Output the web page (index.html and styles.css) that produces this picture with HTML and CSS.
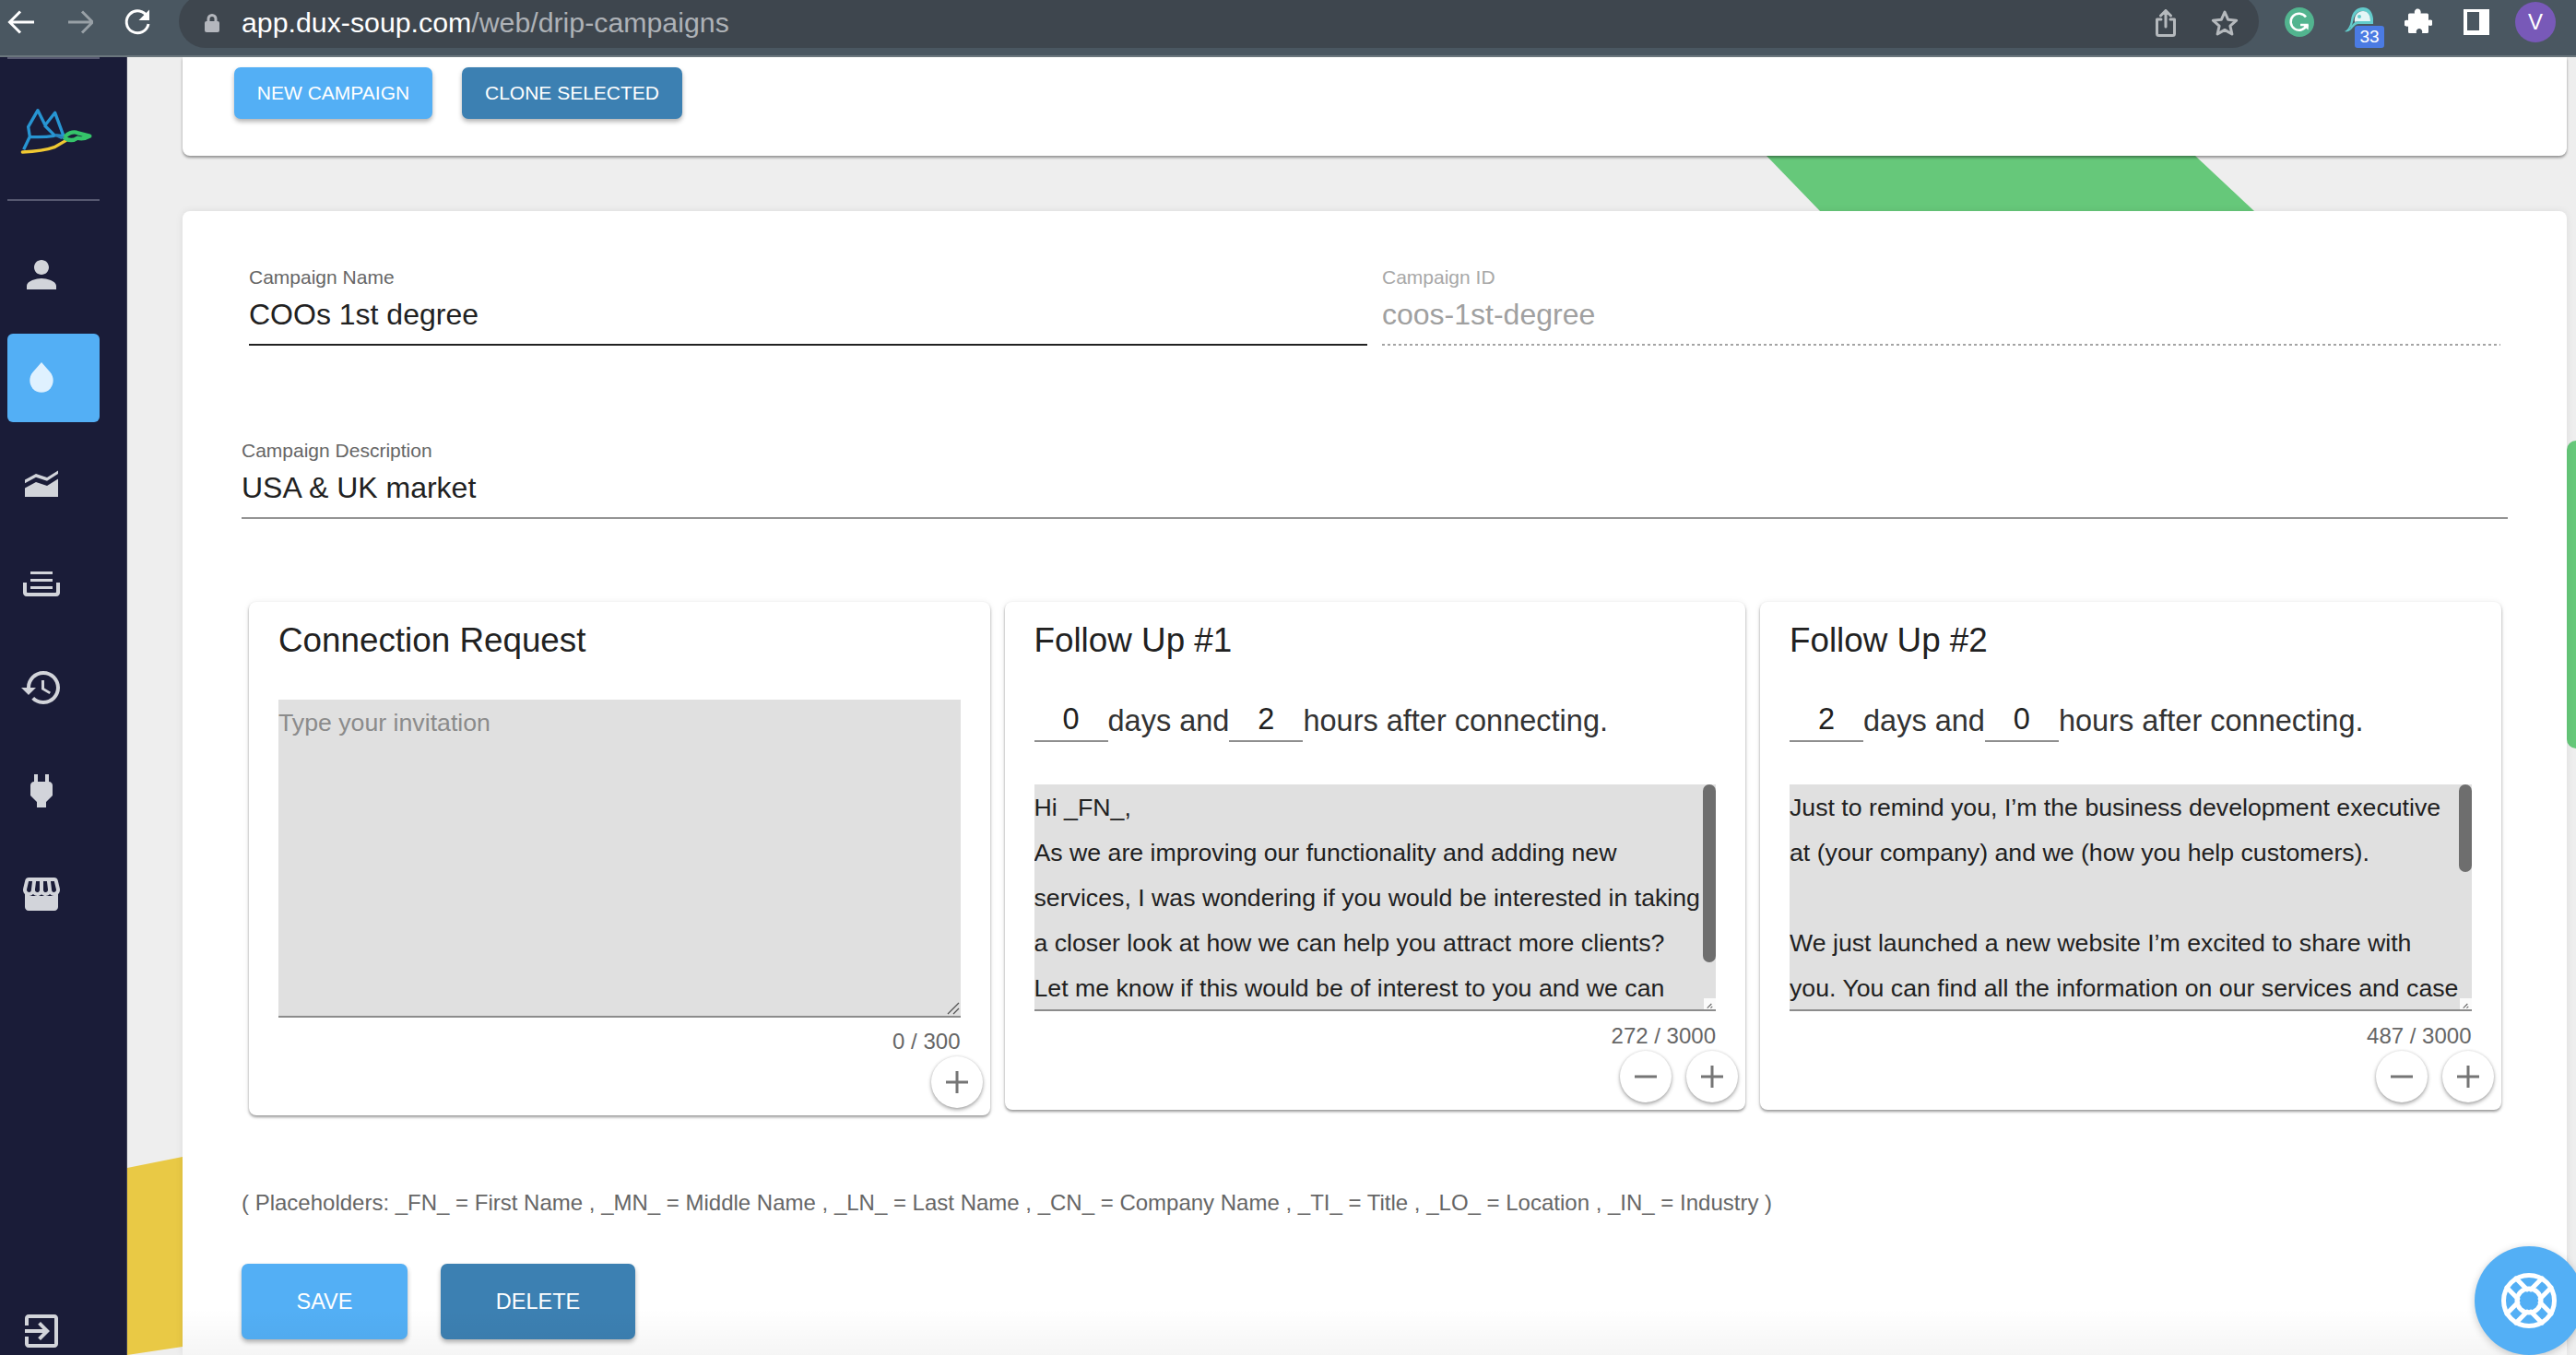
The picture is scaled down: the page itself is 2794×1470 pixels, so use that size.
FILE: index.html
```html
<!DOCTYPE html>
<html lang="en">
<head>
<meta charset="utf-8">
<title>Drip Campaigns</title>
<link rel="stylesheet" href="styles.css">
</head>
<body>
<div class="app">
  <header class="toolbar">
    <svg class="tb-nav" viewBox="0 0 30 30"><path class="st-white" d="M29 15H3M14 3.500 2.500 15 14 26.500"/></svg>
    <svg class="tb-nav" viewBox="0 0 30 30"><path class="st-dim" d="M3 15h26M18 3.500 29.500 15 18 26.500"/></svg>
    <svg class="tb-nav" viewBox="0 0 30 30"><path class="st-white" d="M26 9.500A12 12 0 1 0 27 17"/><path class="fl-white" d="M28 1.500V13H16.500z"/></svg>
    <div class="omnibox">
      <svg class="lock" viewBox="0 0 16 20"><path class="st-lock" d="M4 9V5.500a4 4 0 0 1 8 0V9"/><rect class="fl-lock" x="0" y="8" width="16" height="12" rx="2"/></svg>
      <span class="url"><span class="url-host">app.dux-soup.com</span>/web/drip-campaigns</span>
      <svg class="omni-share" viewBox="0 0 24 30"><path class="st-grey" d="M7 11H2.500v15.500a2 2 0 0 0 2 2h15a2 2 0 0 0 2-2V11H17M12 19V2M6.500 7 12 1.500 17.500 7"/></svg>
      <svg class="omni-star" viewBox="0 0 30 30"><path class="st-grey" d="M15 3l3.700 8.300 9 .900-6.800 6 2 8.800L15 22.400 7.100 27l2-8.800-6.800-6 9-.900z"/></svg>
    </div>
    <svg class="ext-g" viewBox="0 0 32 32"><circle class="fl-gram" cx="16" cy="16" r="16"/><path class="st-gram" d="M23 10.500a9 9 0 1 0 1 8.500h-7"/><path class="fl-white" d="M20.500 20l5 4.500.5-6z"/></svg>
    <div class="ext-duck">
      <svg class="duck" viewBox="0 0 32 30"><path class="fl-teal" d="M1 27c4-2 6-6 7-12C9 6 14 1 21 1c6 0 10 4 11 12v6H16c-3 0-5 3-8 6-2 2-5 3-7 2z"/><path class="fl-toolbar" d="M5.500 25c3-2 4-6 5-10 1-6 5-10 10-10 5 0 8 4 8.500 11H16c-4 0-6 3-8 6z"/><path class="fl-pale" d="M12 17c-1-7 3-12 9-12 5 0 8 4 8 11H17c-2 0-4 0-5 1z"/><circle class="fl-teal" cx="17" cy="11" r="2"/></svg>
      <span class="badge">33</span>
    </div>
    <svg class="ext-puzzle" viewBox="0 0 30 30"><path class="fl-white" d="M11 1c3-1.500 6 1 5 4.500h7a1.500 1.500 0 0 1 1.500 1.500v6c4-1.500 6 1.500 5 4-1 2-3 2.500-5 1.500v7a1.500 1.500 0 0 1-1.500 1.500h-5.500c.9-3-1-5-3-5s-4 2-3 5H4a1.500 1.500 0 0 1-1.500-1.500v-6c-2.500 1-5-1-5-3.300 0-2.700 2.500-4 5-3V7A1.500 1.500 0 0 1 4 5.500h5.500C9 4 9.500 2 11 1z" transform="translate(1.500 0)"/></svg>
    <div class="ext-side"><span class="ext-side-hole"></span></div>
    <div class="avatar">V</div>
  </header>

  <div class="workspace">
    <nav class="sidebar">
      <div class="logo-wrap">
        <svg class="logo" viewBox="0 0 300 210">
          <path class="logo-blue" d="M32 172 52 130 47 98 78 44l24 48 32-40 28 76-30-3-32-32M52 130c30 2 60 0 80-3"/>
          <path class="logo-yellow" d="M28 180c40-2 75-6 104-16l38-22"/>
          <path class="logo-green" d="M165 134c6-14 28-24 44-16l38 10c-14 8-28 10-40 6-14 10-30 8-42 0z"/>
          <path class="logo-blue-fill" d="M132 122c12 2 26 4 34 10l-12 6c-8-4-18-8-22-16z"/>
        </svg>
      </div>
      <ul class="nav-list">
        <li class="nav-item"><svg class="nav-icon" viewBox="0 0 24 24"><path d="M12 12c2.210 0 4-1.790 4-4s-1.790-4-4-4-4 1.790-4 4 1.790 4 4 4zm0 2c-2.670 0-8 1.340-8 4v2h16v-2c0-2.660-5.330-4-8-4z"/></svg></li>
        <li class="nav-item nav-active"><svg class="nav-icon" viewBox="0 0 24 24"><path d="M12 3.500L16.600 8.800C19.200 11.900 18.600 15.500 16.800 17.700C14.300 20.600 9.700 20.600 7.200 17.700C5.400 15.500 4.800 11.900 7.400 8.800Z"/></svg></li>
        <li class="nav-item"><svg class="nav-icon" viewBox="-6 -9 48 48"><path d="M0 13.500 12 7l12 4 12-7.500v3.600L24 14.800l-12-4L0 17.300zM0 22.500 12 16l12 4 12-7.500V32H0z"/></svg></li>
        <li class="nav-item"><svg class="nav-icon" viewBox="0 0 48 48"><path d="M12 10h24v3H12zM12 18h24v3H12zM12 26h24v3H12z"/><path d="M4 22h4v10c0 .5.500 1 1 1h30c.5 0 1-.5 1-1V22h4v11c0 2-1.500 4-4 4H8c-2.500 0-4-2-4-4z"/></svg></li>
        <li class="nav-item"><svg class="nav-icon" viewBox="0 0 24 24"><path d="M13 3c-4.970 0-9 4.030-9 9H1l3.890 3.890.070.140L9 12H6c0-3.870 3.130-7 7-7s7 3.130 7 7-3.130 7-7 7c-1.930 0-3.680-.79-4.940-2.060l-1.420 1.420C8.270 19.990 10.510 21 13 21c4.970 0 9-4.030 9-9s-4.030-9-9-9zm-1 5v5l4.280 2.540.72-1.210-3.500-2.080V8H12z"/></svg></li>
        <li class="nav-item"><svg class="nav-icon" viewBox="0 0 24 24"><path d="M16 7V3h-2v4h-4V3H8v4h-.01C6.890 6.990 6 7.890 6 8.980v5.520L9.500 18v3h5v-3l3.500-3.510V9c0-1.100-.9-2-2-2z"/></svg></li>
        <li class="nav-item"><svg class="nav-icon" viewBox="0 0 24 24"><path d="M21.900 8.890l-1.050-4.370c-.22-.9-1-1.520-1.910-1.520H5.050c-.9 0-1.690.63-1.900 1.520L2.100 8.890c-.24 1.020-.02 2.060.62 2.880.08.110.19.190.28.290V19c0 1.100.9 2 2 2h14c1.100 0 2-.9 2-2v-6.940c.09-.09.2-.18.28-.28.64-.82.87-1.870.62-2.890zm-2.990-3.900l1.050 4.370c.1.420.01.84-.25 1.170-.14.180-.44.470-.94.470-.61 0-1.140-.49-1.210-1.140L16.980 5l1.930-.01zM13 5h1.960l.54 4.520c.05.390-.07.78-.33 1.070-.22.26-.54.410-.95.410-.67 0-1.220-.59-1.220-1.310V5zM8.490 9.520L9.040 5H11v4.690c0 .72-.55 1.310-1.290 1.310-.34 0-.65-.15-.89-.41-.25-.29-.37-.68-.33-1.070zm-4.450-.16L5.050 5h1.970l-.58 4.860c-.08.65-.6 1.140-1.210 1.140-.49 0-.8-.29-.93-.47-.27-.32-.36-.75-.26-1.170zM5 19v-6.030c.08.010.15.030.23.030.87 0 1.660-.36 2.240-.95.6.6 1.400.95 2.310.95.87 0 1.650-.36 2.230-.93.59.57 1.390.93 2.290.93.84 0 1.640-.35 2.240-.95.58.59 1.370.95 2.240.95.08 0 .15-.02.23-.03V19H5z"/><path d="M4.500 13h15v6.500h-15z"/></svg></li>
      </ul>
      <div class="nav-bottom"><svg class="nav-icon" viewBox="0 0 24 24"><path d="M10.090 15.590L11.500 17l5-5-5-5-1.410 1.410L12.670 11H3v2h9.670l-2.580 2.590zM19 3H5c-1.110 0-2 .9-2 2v4h2V5h14v14H5v-4H3v4c0 1.100.89 2 2 2h14c1.100 0 2-.9 2-2V5c0-1.100-.9-2-2-2z"/></svg></div>
    </nav>

    <main class="content">
      <div class="decor decor-green-top"></div>
      <div class="decor decor-green-side"></div>
      <div class="decor decor-yellow"></div>

      <section class="top-card">
        <button class="btn btn-light btn-new">NEW CAMPAIGN</button>
        <button class="btn btn-dark btn-clone">CLONE SELECTED</button>
      </section>

      <section class="main-card">
        <div class="field-row">
          <div class="field field-half">
            <div class="field-label">Campaign Name</div>
            <div class="field-value field-value-strong">COOs 1st degree</div>
          </div>
          <div class="field field-half field-disabled">
            <div class="field-label">Campaign ID</div>
            <div class="field-value">coos-1st-degree</div>
          </div>
        </div>
        <div class="field field-desc">
          <div class="field-label">Campaign Description</div>
          <div class="field-value">USA &amp; UK market</div>
        </div>

        <div class="message-row">
          <article class="msg-card">
            <h2 class="msg-title">Connection Request</h2>
            <div class="msg-text msg-text-tall">
              <div class="msg-placeholder">Type your invitation</div>
              <svg class="resize-plain" viewBox="0 0 14 14"><path d="M13 1 1 13M13 7l-6 6"/></svg>
            </div>
            <div class="msg-count msg-count-tall">0 / 300</div>
            <div class="msg-actions">
              <button class="round-btn" aria-label="Add"><svg viewBox="0 0 24 24"><path d="M12 0v24M0 12h24"/></svg></button>
            </div>
          </article>

          <article class="msg-card">
            <h2 class="msg-title">Follow Up #1</h2>
            <div class="delay">
              <span class="delay-num">0</span><span>days and</span><span class="delay-num">2</span><span>hours after connecting.</span>
            </div>
            <div class="msg-text">
              <div>Hi _FN_,</div>
              <div>As we are improving our functionality and adding new</div>
              <div>services, I was wondering if you would be interested in taking</div>
              <div>a closer look at how we can help you attract more clients?</div>
              <div>Let me know if this would be of interest to you and we can</div>
              <span class="scroll-thumb scroll-thumb-long"></span>
              <span class="resize-box"><svg viewBox="0 0 14 12"><path d="M4 11l5-5M8 11l2-2"/></svg></span>
            </div>
            <div class="msg-count">272 / 3000</div>
            <div class="msg-actions">
              <button class="round-btn" aria-label="Remove"><svg viewBox="0 0 24 24"><path d="M0 12h24"/></svg></button>
              <button class="round-btn" aria-label="Add"><svg viewBox="0 0 24 24"><path d="M12 0v24M0 12h24"/></svg></button>
            </div>
          </article>

          <article class="msg-card">
            <h2 class="msg-title">Follow Up #2</h2>
            <div class="delay">
              <span class="delay-num">2</span><span>days and</span><span class="delay-num">0</span><span>hours after connecting.</span>
            </div>
            <div class="msg-text">
              <div>Just to remind you, I’m the business development executive</div>
              <div>at (your company) and we (how you help customers).</div>
              <div>&nbsp;</div>
              <div>We just launched a new website I’m excited to share with</div>
              <div>you. You can find all the information on our services and case</div>
              <span class="scroll-thumb scroll-thumb-short"></span>
              <span class="resize-box"><svg viewBox="0 0 14 12"><path d="M4 11l5-5M8 11l2-2"/></svg></span>
            </div>
            <div class="msg-count">487 / 3000</div>
            <div class="msg-actions">
              <button class="round-btn" aria-label="Remove"><svg viewBox="0 0 24 24"><path d="M0 12h24"/></svg></button>
              <button class="round-btn" aria-label="Add"><svg viewBox="0 0 24 24"><path d="M12 0v24M0 12h24"/></svg></button>
            </div>
          </article>
        </div>

        <p class="placeholders">( Placeholders: _FN_ = First Name , _MN_ = Middle Name , _LN_ = Last Name , _CN_ = Company Name , _TI_ = Title , _LO_ = Location , _IN_ = Industry )</p>

        <div class="form-actions">
          <button class="btn btn-light btn-save">SAVE</button>
          <button class="btn btn-dark btn-delete">DELETE</button>
        </div>
      </section>

      <div class="bottom-fade"></div>
      <button class="help" aria-label="Help">
        <svg viewBox="0 0 60 60"><circle cx="30" cy="30" r="27.500"/><circle cx="30" cy="30" r="13"/><path d="M42.070 27.930L54.160 15.840M32.070 17.930L44.160 5.840M32.070 42.070L44.160 54.160M42.070 32.070L54.160 44.160M17.930 32.070L5.840 44.160M27.930 42.070L15.840 54.160M27.930 17.930L15.840 5.840M17.930 27.930L5.840 15.840"/></svg>
      </button>
    </main>
  </div>
</div>
</body>
</html>
```
FILE: styles.css
```css
* { box-sizing: border-box; }
html, body { margin: 0; padding: 0; height: 100%; overflow: hidden; }
body { font-family: "Liberation Sans", Arial, sans-serif; color: #212121; background: #eee; }
.app { width: 2794px; height: 1470px; display: flex; flex-direction: column; overflow: hidden; }

/* browser toolbar */
.toolbar { height: 62px; flex: none; display: flex; align-items: center; padding: 0 0 12px 8px; background: #4a5761; border-bottom: 2px solid #6b767d; position: relative; z-index: 2; }
.tb-nav { width: 30px; height: 30px; margin-right: 33px; flex: none; }
.st-white, .st-dim, .st-grey, .st-lock, .st-gram { fill: none; stroke-width: 3; }
.st-white { stroke: #fff; }
.st-dim { stroke: #98a0a6; }
.st-grey { stroke: #b5b9bd; stroke-linejoin: round; stroke-linecap: round; }
.st-lock { stroke: #b4b7bd; }
.fl-lock { fill: #b4b7bd; }
.fl-white { fill: #fff; }
.omnibox { align-self: flex-start; margin-top: -6px; margin-left: -3px; margin-right: 28px; width: 2256px; height: 58px; flex: none; display: flex; align-items: center; padding: 3px 22px 0 28px; background: #3e464e; border-radius: 29px; }
.lock { width: 16px; height: 20px; margin-right: 24px; flex: none; }
.url { font-size: 30.300px; color: #aeb2b7; white-space: nowrap; }
.url-host { color: #fff; }
.omni-share { width: 24px; height: 30px; margin-left: auto; }
.omni-star { width: 30px; height: 30px; margin-left: 37px; }
.ext-g { width: 32px; height: 32px; margin-right: 32px; flex: none; }
.fl-gram { fill: #52b48f; }
.st-gram { stroke: #fff; stroke-width: 2.500; }
.ext-duck { width: 44px; height: 48px; margin-right: 22px; flex: none; position: relative; }
.duck { width: 32px; height: 30px; display: block; margin-top: 7px; }
.fl-teal { fill: #62cbcb; }
.fl-toolbar { fill: #4a5761; }
.fl-pale { fill: #e4f6f6; }
.badge { position: absolute; left: 12px; top: 28px; width: 32px; height: 24px; border-radius: 3px; background: #4b7be3; color: #fff; font-size: 19px; line-height: 24px; text-align: center; }
.ext-puzzle { width: 30px; height: 30px; margin-right: 34px; flex: none; }
.ext-side { width: 28px; height: 28px; margin-right: 28px; flex: none; background: #fff; padding: 3px 11px 5px 4px; }
.ext-side-hole { display: block; width: 100%; height: 100%; background: #4a5761; }
.avatar { width: 44px; height: 44px; flex: none; border-radius: 50%; background: #7859b8; color: #fff; font-size: 24px; line-height: 44px; text-align: center; }

/* layout */
.workspace { flex: 1; display: flex; min-height: 0; }
.sidebar { width: 138px; flex: none; display: flex; flex-direction: column; background: #1a1c38; border-right: 1px solid #3f4157; }
.logo-wrap { margin: 0 8px; width: 100px; height: 156px; border-top: 2px solid #565870; border-bottom: 2px solid #565870; position: relative; }
.logo { position: absolute; left: 7px; top: 41px; width: 100px; height: 70px; }
.logo-blue { fill: none; stroke: #2795d2; stroke-width: 10; stroke-linejoin: round; }
.logo-blue-fill { fill: #2a7fb8; }
.logo-yellow { fill: none; stroke: #f0c832; stroke-width: 10; stroke-linecap: round; }
.logo-green { fill: none; stroke: #35c46a; stroke-width: 13; stroke-linejoin: round; }
.nav-list { list-style: none; margin: 32px 0 0 8px; padding: 0; display: flex; flex-direction: column; gap: 16px; }
.nav-item { width: 100px; height: 96px; display: flex; align-items: center; padding-left: 13px; border-radius: 6px; }
.nav-active { background: #53aff5; }
.nav-icon { width: 48px; height: 48px; fill: #d2d4da; display: block; }
.nav-active .nav-icon { fill: #dff1ff; }
.nav-bottom { margin-top: auto; margin-left: 21px; padding-bottom: 2px; }

.content { flex: 1; min-width: 0; position: relative; z-index: 0; overflow: hidden; display: flex; flex-direction: column; padding: 0 10px 0 60px; background: #eee; }
.decor { position: absolute; z-index: -1; }
.decor-green-top { left: 1778px; top: 107px; width: 529px; height: 60px; background: #66c87a; clip-path: polygon(0 0, 465px 0, 100% 100%, 58px 100%); }
.decor-green-side { left: 2646px; top: 416px; width: 10px; height: 334px; background: #66c87a; border-radius: 12px 0 0 12px; }
.decor-yellow { left: 0; top: 1193px; width: 60px; height: 215px; background: #e9c945; clip-path: polygon(0 12px, 100% 0, 100% 206px, 0 100%); }

/* cards */
.top-card { height: 107px; flex: none; display: flex; align-items: flex-start; gap: 32px; padding: 11px 0 0 56px; background: #fff; border-radius: 0 0 8px 8px; box-shadow: 0 2px 3px rgba(0, 0, 0, .4); }
.main-card { flex: 1; margin-top: 60px; min-height: 0; padding: 59px 0 0 72px; background: #fff; border-radius: 8px 8px 0 0; box-shadow: 0 0 8px rgba(0, 0, 0, .08); }

.btn { border: 0; padding: 0; margin: 0; font-family: inherit; color: #fff; border-radius: 7px; box-shadow: 0 3px 5px rgba(0, 0, 0, .3); text-align: center; }
.btn-light { background: #53aff5; }
.btn-dark { background: #3c80b2; }
.btn-new { width: 215px; height: 56px; font-size: 21px; }
.btn-clone { width: 239px; height: 56px; font-size: 21px; }
.btn-save { width: 180px; height: 82px; font-size: 23.500px; }
.btn-delete { width: 211px; height: 82px; font-size: 23.500px; }

/* fields */
.field-row { display: flex; gap: 16px; }
.field-half { width: 1213px; }
.field-label { height: 26px; font-size: 21px; line-height: 26px; color: #666; }
.field-value { height: 54px; margin-top: 7px; padding-bottom: 12px; font-size: 32px; line-height: 40px; color: #212121; border-bottom: 2px solid #949494; }
.field-value-strong { border-bottom-color: #222; }
.field-disabled .field-label { color: #a8a8a8; }
.field-disabled .field-value { color: #a0a0a0; border-bottom: 0; background: repeating-linear-gradient(90deg, #a4a4a4 0 3px, transparent 3px 6px) left bottom / 100% 2px no-repeat; }
.field-desc { margin: 101px 64px 0 -8px; }

/* message cards */
.message-row { display: flex; align-items: flex-start; gap: 16px; margin-top: 90px; }
.msg-card { width: 803.500px; flex: none; padding: 20px 32px 8px; background: #fff; border-radius: 8px; box-shadow: 0 2px 3px rgba(0, 0, 0, .38), 0 0 7px rgba(0, 0, 0, .07); }
.msg-title { margin: 0 0 42px; font-size: 36.800px; line-height: 44px; font-weight: 400; color: #212121; }
.delay { height: 46px; margin-bottom: 46px; display: flex; font-size: 32.500px; line-height: 46px; color: #333; }
.delay-num { width: 80px; height: 46px; line-height: 42px; text-align: center; color: #212121; border-bottom: 2px solid #8f8f8f; }
.msg-text { height: 246px; position: relative; overflow: hidden; padding-top: 1px; background: #e0e0e0; border-bottom: 2px solid #8c8c8c; font-size: 26.700px; line-height: 49px; white-space: nowrap; color: #212121; }
.msg-text-tall { height: 345px; }
.msg-placeholder { color: #8b8b8b; }
.scroll-thumb { position: absolute; right: 0; top: 0; width: 14px; border-radius: 7px; background: #6e6e6e; }
.scroll-thumb-long { height: 193px; }
.scroll-thumb-short { height: 95px; }
.resize-box { position: absolute; right: 0; bottom: 0; width: 13px; height: 12px; background: #fbfbfb; }
.resize-box svg { display: block; width: 13px; height: 12px; fill: none; stroke: #666; stroke-width: 1.200; }
.resize-plain { position: absolute; right: 1px; bottom: 1px; width: 14px; height: 14px; fill: none; stroke: #555; stroke-width: 1.300; }
.msg-count { margin-top: 13px; font-size: 24px; line-height: 28px; text-align: right; color: #666; }
.msg-count-tall { margin-top: 12px; }
.msg-actions { display: flex; justify-content: flex-end; gap: 16px; margin: 2px -24px 0 0; }
.round-btn { width: 56px; height: 56px; padding: 16px; border: 0; border-radius: 50%; background: #fff; box-shadow: 0 2px 4px rgba(0, 0, 0, .35), 0 0 3px rgba(0, 0, 0, .1); }
.round-btn svg { display: block; width: 24px; height: 24px; fill: none; stroke: #757575; stroke-width: 3; }

.placeholders { margin: 81px 0 0 -8px; font-size: 24px; line-height: 28px; color: #666; white-space: nowrap; }
.form-actions { display: flex; gap: 36px; margin: 52px 0 0 -8px; }

.bottom-fade { position: absolute; left: 60px; right: 10px; bottom: 0; height: 50px; background: linear-gradient(rgba(0, 0, 0, 0), rgba(0, 0, 0, .04)); }
.help { position: absolute; left: 2546px; top: 1290px; width: 118px; height: 118px; padding: 29px; border: 0; border-radius: 50%; background: #53aff5; box-shadow: 0 2px 8px rgba(0, 0, 0, .2); }
.help svg { display: block; width: 60px; height: 60px; fill: none; stroke: #fff; stroke-width: 5; stroke-linecap: round; }
```
